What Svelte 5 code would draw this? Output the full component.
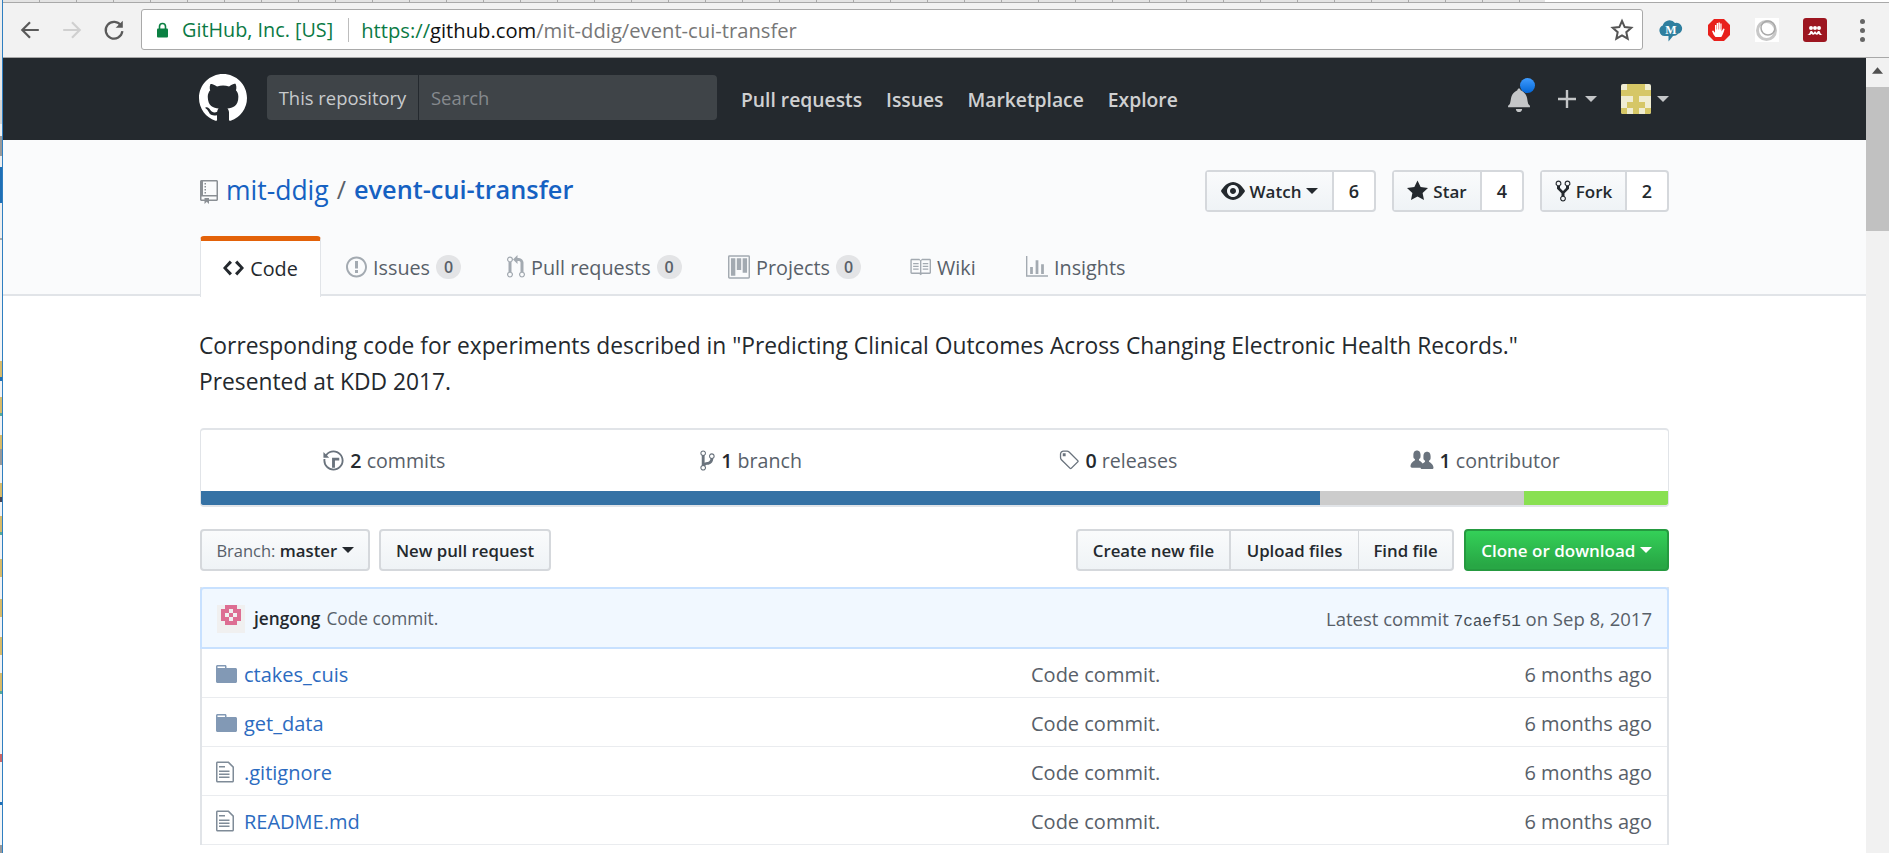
<script>
  const edge = [
    [50,'#e8e8e8'],[24,'#d5d5d5'],[12,'#f0f0f0'],[20,'#999'],[11,'#eee'],[36,'#1f6fb5'],[35,'#eee'],[2,'#aaa'],[121,'#f4f4f4'],
    [16,'#d9bb6a'],[4,'#1f6fb5'],[16,'#f2f2f2'],[16,'#d9bb6a'],[3,'#5a9'],[19,'#f2f2f2'],[14,'#d9bb6a'],[16,'#999'],[18,'#f2f2f2'],
    [14,'#d9bb6a'],[5,'#445'],[14,'#f2f2f2'],[16,'#d9bb6a'],[3,'#5a9'],[24,'#f2f2f2'],[18,'#d9bb6a'],[22,'#f2f2f2'],[18,'#d9bb6a'],
    [20,'#f2f2f2'],[18,'#d9bb6a'],[18,'#f2f2f2'],[18,'#d9bb6a'],[3,'#5a9'],[60,'#f4f4f4'],[8,'#c66'],[40,'#f4f4f4'],[3,'#1f6fb5'],[40,'#f4f4f4'],[10,'#999'],[20,'#f4f4f4'],[12,'#d9bb6a'],[8,'#1f6fb5'],[10,'#f4f4f4'],[16,'#999'],[14,'#f4f4f4'],[16,'#d9bb6a']
  ];
  const p = {
    logo: 'M8 0C3.58 0 0 3.58 0 8c0 3.54 2.29 6.53 5.47 7.59.4.07.55-.17.55-.38 0-.19-.01-.82-.01-1.49-2.01.37-2.53-.49-2.69-.94-.09-.23-.48-.94-.82-1.13-.28-.15-.68-.52-.01-.53.63-.01 1.08.58 1.23.82.72 1.21 1.87.87 2.33.66.07-.52.28-.87.51-1.07-1.78-.2-3.64-.89-3.64-3.95 0-.87.31-1.59.82-2.15-.08-.2-.36-1.02.08-2.12 0 0 .67-.21 2.2.82.64-.18 1.32-.27 2-.27.68 0 1.36.09 2 .27 1.53-1.04 2.2-.82 2.2-.82.44 1.1.16 1.92.08 2.12.51.56.82 1.27.82 2.15 0 3.07-1.87 3.75-3.65 3.95.29.25.54.73.54 1.48 0 1.07-.01 1.93-.01 2.2 0 .21.15.46.55.38A8.013 8.013 0 0016 8c0-4.42-3.58-8-8-8z',
    bell: 'M14 12v1H0v-1l.73-.58c.77-.77.81-2.55 1.19-4.42C2.69 3.23 6 2 6 2c0-.55.45-1 1-1s1 .45 1 1c0 0 3.39 1.23 4.16 5 .38 1.88.42 3.66 1.19 4.42l.66.58H14zm-7 4c1.11 0 2-.89 2-2H5c0 1.11.89 2 2 2z',
    repo: 'M4 9H3V8h1v1zm0-3H3v1h1V6zm0-2H3v1h1V4zm0-2H3v1h1V2zm8-1v12c0 .55-.45 1-1 1H6v2l-1.5-1.5L3 16v-2H1c-.55 0-1-.45-1-1V1c0-.55.45-1 1-1h10c.55 0 1 .45 1 1zm-1 10H1v2h2v-1h3v1h5v-2zm0-10H2v9h9V1z',
    code: 'M9.5 3L8 4.5 11.5 8 8 11.5 9.5 13 14 8 9.5 3zm-5 0L0 8l4.5 5L6 11.5 2.5 8 6 4.5 4.5 3z',
    issue: 'M7 2.3c3.14 0 5.7 2.56 5.7 5.7s-2.56 5.7-5.7 5.7A5.71 5.71 0 0 1 1.3 8c0-3.14 2.56-5.7 5.7-5.7zM7 1C3.14 1 0 4.14 0 8s3.14 7 7 7 7-3.14 7-7-3.14-7-7-7zm1 3H6v5h2V4zm0 6H6v2h2v-2z',
    pull: 'M11 11.28V5c-.03-.78-.34-1.47-.94-2.06C9.46 2.35 8.78 2.03 8 2H7V0L4 3l3 3V4h1c.27.02.48.11.69.31.21.2.3.42.31.69v6.28A1.993 1.993 0 0 0 10 15a1.993 1.993 0 0 0 1-3.72zm-1 2.92c-.66 0-1.2-.55-1.2-1.2 0-.65.55-1.2 1.2-1.2.65 0 1.2.55 1.2 1.2 0 .65-.55 1.2-1.2 1.2zM4 3c0-1.11-.89-2-2-2a1.993 1.993 0 0 0-1 3.72v6.56A1.993 1.993 0 0 0 2 15a1.993 1.993 0 0 0 1-3.72V4.72c.59-.34 1-.98 1-1.72zm-.8 10c0 .66-.55 1.2-1.2 1.2-.65 0-1.2-.55-1.2-1.2 0-.65.55-1.2 1.2-1.2.65 0 1.2.55 1.2 1.2zM2 4.2C1.34 4.2.8 3.65.8 3c0-.65.55-1.2 1.2-1.2.65 0 1.2.55 1.2 1.2 0 .65-.55 1.2-1.2 1.2z',
    project: 'M10 12h3V2h-3v10zm-4-2h3V2H6v8zm-4 4h3V2H2v12zm-1 1h13V1H1v14zM14 0H1a1 1 0 0 0-1 1v14a1 1 0 0 0 1 1h13a1 1 0 0 0 1-1V1a1 1 0 0 0-1-1z',
    book: 'M3 5h4v1H3V5zm0 3h4V7H3v1zm0 2h4V9H3v1zm11-5h-4v1h4V5zm0 2h-4v1h4V7zm0 2h-4v1h4V9zm2-6v9c0 .55-.45 1-1 1H9.5l-1 1-1-1H2c-.55 0-1-.45-1-1V3c0-.55.45-1 1-1h5.5l1 1 1-1H15c.55 0 1 .45 1 1zm-8 .5L7.5 3H2v9h6V3.5zm7-.5H9.5l-.5.5V12h6V3z',
    graph: 'M16 14v1H0V0h1v14h15zM5 13H3V8h2v5zm4 0H7V3h2v10zm4 0h-2V6h2v7z',
    eye: 'M8.06 2C3 2 0 8 0 8s3 6 8.06 6C13 14 16 8 16 8s-3-6-7.94-6zM8 12c-2.2 0-4-1.78-4-4 0-2.2 1.8-4 4-4 2.22 0 4 1.8 4 4 0 2.22-1.78 4-4 4zm2-4c0 1.11-.89 2-2 2-1.11 0-2-.89-2-2 0-1.11.89-2 2-2 1.11 0 2 .89 2 2z',
    star: 'M14 6l-4.9-.64L7 1 4.9 5.36 0 6l3.6 3.26L2.67 14 7 11.67 11.33 14l-.93-4.74L14 6z',
    fork: 'M8 1a1.993 1.993 0 0 0-1 3.72V6L5 8 3 6V4.72A1.993 1.993 0 0 0 2 1a1.993 1.993 0 0 0-1 3.72V6.5l3 3v1.78A1.993 1.993 0 0 0 5 15a1.993 1.993 0 0 0 1-3.72V9.5l3-3V4.72A1.993 1.993 0 0 0 8 1zM2 4.2C1.34 4.2.8 3.65.8 3c0-.65.55-1.2 1.2-1.2.65 0 1.2.55 1.2 1.2 0 .65-.55 1.2-1.2 1.2zm3 10c-.66 0-1.2-.55-1.2-1.2 0-.65.55-1.2 1.2-1.2.65 0 1.2.55 1.2 1.2 0 .65-.55 1.2-1.2 1.2zm3-10c-.66 0-1.2-.55-1.2-1.2 0-.65.55-1.2 1.2-1.2.65 0 1.2.55 1.2 1.2 0 .65-.55 1.2-1.2 1.2z',
    history: 'M8 13H6V6h5v2H8v5zM7 1C4.81 1 2.87 2.02 1.59 3.59L0 2v4h4L2.5 4.5C3.55 3.17 5.17 2.3 7 2.3c3.14 0 5.7 2.56 5.7 5.7s-2.56 5.7-5.7 5.7A5.71 5.71 0 0 1 1.3 8c0-.34.03-.67.09-1H.08C.03 7.33 0 7.66 0 8c0 3.86 3.14 7 7 7s7-3.14 7-7-3.14-7-7-7z',
    branch: 'M10 5c0-1.11-.89-2-2-2a1.993 1.993 0 0 0-1 3.72v.3c-.02.52-.23.98-.63 1.38-.4.4-.86.61-1.38.63-.83.02-1.48.16-2 .45V4.72a1.993 1.993 0 0 0-1-3.72C.88 1 0 1.89 0 3a2 2 0 0 0 1 1.72v6.56c-.59.35-1 .99-1 1.72 0 1.11.89 2 2 2 1.11 0 2-.89 2-2 0-.53-.2-1-.53-1.36.09-.06.48-.41.59-.47.25-.11.56-.17.94-.17 1.05-.05 1.95-.45 2.75-1.25S8.95 7.77 9 6.73h-.02C9.59 6.37 10 5.73 10 5zM2 1.8c.66 0 1.2.55 1.2 1.2 0 .65-.55 1.2-1.2 1.2C1.35 4.2.8 3.65.8 3c0-.65.55-1.2 1.2-1.2zm0 12.41c-.66 0-1.2-.55-1.2-1.2 0-.65.55-1.2 1.2-1.2.65 0 1.2.55 1.2 1.2 0 .65-.55 1.2-1.2 1.2zm6-8c-.66 0-1.2-.55-1.2-1.2 0-.65.55-1.2 1.2-1.2.65 0 1.2.55 1.2 1.2 0 .65-.55 1.2-1.2 1.2z',
    tag: 'M7.73 1.73C7.26 1.26 6.62 1 5.96 1H3.5C2.13 1 1 2.13 1 3.5v2.47c0 .66.27 1.3.73 1.77l6.06 6.06c.39.39 1.02.39 1.41 0l4.59-4.59a.996.996 0 0 0 0-1.41L7.73 1.73zM2.38 7.09c-.31-.3-.47-.7-.47-1.13V3.5c0-.88.72-1.59 1.59-1.59h2.47c.42 0 .83.16 1.13.47l6.14 6.13-4.73 4.73-6.13-6.15zM3.01 3h2v2H3V3h.01z',
    org: 'M16 12.999c0 .439-.45 1-1 1H7.995c-.539 0-.994-.447-.995-.999H1c-.54 0-1-.561-1-1 0-2.634 3-4 3-4s.229-.409 0-1c-.841-.621-1.058-.59-1-3 .058-2.419 1.367-3 2.5-3s2.442.58 2.5 3c.058 2.41-.159 2.379-1 3-.229.59 0 1 0 1s1.549.711 2.42 2.088C9.196 9.369 10 8.999 10 8.999s.229-.409 0-1c-.841-.62-1.058-.59-1-3 .058-2.419 1.367-3 2.5-3s2.437.581 2.495 3c.059 2.41-.158 2.38-1 3-.229.59 0 1 0 1s3.005 1.366 3.005 4z',
    dir: 'M13 4H7V3c0-.66-.31-1-1-1H1c-.55 0-1 .45-1 1v10c0 .55.45 1 1 1h12c.55 0 1-.45 1-1V5c0-.55-.45-1-1-1zM6 4H1V3h5v1z',
    file: 'M6 5H2V4h4v1zM2 8h7V7H2v1zm0 2h7V9H2v1zm0 2h7v-1H2v1zm10-7.5V14c0 .55-.45 1-1 1H1c-.55 0-1-.45-1-1V2c0-.55.45-1 1-1h7.5L12 4.5zM11 5L8 2H1v12h10V5z'
  };
  const tabs = [
    { name:'Issues', path:p.issue, vb:'0 0 14 16', w:21, count:0, wrapW:161 },
    { name:'Pull requests', path:p.pull, vb:'0 0 12 16', w:18, count:0, wrapW:221 },
    { name:'Projects', path:p.project, vb:'0 0 15 16', w:22, count:0, wrapW:181 },
    { name:'Wiki', path:p.book, vb:'0 0 16 16', w:22, wrapW:117 },
    { name:'Insights', path:p.graph, vb:'0 0 16 16', w:22 }
  ];
  const files = [
    { name:'ctakes_cuis', dir:true },
    { name:'get_data', dir:true },
    { name:'.gitignore' },
    { name:'README.md' }
  ];
  const stats = [
    { n:'2', t:'commits', path:p.history, vb:'0 0 14 16', w:21, h:23 },
    { n:'1', t:'branch', path:p.branch, vb:'0 0 10 16', w:15, h:23 },
    { n:'0', t:'releases', path:p.tag, vb:'0 0 14 16', w:21, h:23 },
    { n:'1', t:'contributor', path:p.org, vb:'0 0 16 16', w:24, h:23 }
  ];
  const social = [
    { t:'Watch', c:6, path:p.eye, vb:'0 0 16 16', iw:24, w:171, caret:true },
    { t:'Star', c:4, path:p.star, vb:'0 0 14 16', iw:21, w:132 },
    { t:'Fork', c:2, path:p.fork, vb:'0 0 10 16', iw:16, w:129 }
  ];
</script>

<div class="page">
  <div class="edge">
    {#each edge as e}
      <i style="height:{e[0]}px;background:{e[1]}"></i>
    {/each}
  </div>
  <div class="rest">
    <div class="tabstrip"></div>
    <div class="chrome">
      <svg class="cicon back" viewBox="0 0 20 20" width="22" height="22"><path d="M18 10H3M10 3l-7 7 7 7" fill="none" stroke="#5a5a5a" stroke-width="2"/></svg>
      <svg class="cicon fwd" viewBox="0 0 20 20" width="22" height="22"><path d="M2 10h15M10 3l7 7-7 7" fill="none" stroke="#d0d0d0" stroke-width="2"/></svg>
      <svg class="cicon rel" viewBox="0 0 20 20" width="22" height="22"><path d="M16.5 6.2A7.6 7.6 0 1 0 17.6 11" fill="none" stroke="#5a5a5a" stroke-width="2"/><path d="M18 1.5V8h-6.5z" fill="#5a5a5a"/></svg>
      <div class="omni">
        <svg class="lock" viewBox="0 0 12 16" width="13" height="16"><path d="M3 7V4.5a3 3 0 0 1 6 0V7" fill="none" stroke="#0b8043" stroke-width="1.6"/><rect x="0.5" y="6.5" width="11" height="9" rx="1" fill="#0b8043"/></svg>
        <span class="ev">GitHub, Inc. [US]</span>
        <span class="sep"></span>
        <span class="url"><span class="ev">https://</span><span class="host">github.com</span>/mit-ddig/event-cui-transfer</span>
        <svg class="bm" viewBox="0 0 24 24" width="24" height="24"><path d="M12 3l2.7 6.1 6.6.7-5 4.4 1.4 6.5L12 17.4l-5.7 3.3 1.4-6.5-5-4.4 6.6-.7z" fill="none" stroke="#555" stroke-width="2" stroke-linejoin="miter"/></svg>
      </div>
      <div class="exts">
        <svg viewBox="0 0 24 24" width="25" height="24"><path d="M6 18a5.500 5.500 0 0 1-1.800-10.500A7 7 0 0 1 16.500 5a5.500 5.500 0 0 1 3 10.800c-1 1.500-2.700 2.200-5 2.200L10 23.500V18z" fill="#2f7f9f"/><text x="12.500" y="15.500" class="mm">M</text></svg>
        <svg viewBox="0 0 24 24" width="24" height="24"><path d="M7 1h10l6 6v10l-6 6H7l-6-6V7z" fill="#e8201c"/><path d="M8.500 19c-1.500-1.500-2.500-3.500-3.500-6l1.200-.6 1.800 2.300V7h1.300v4.500h.4V5h1.400v6.500h.4V4.500h1.400v7h.4V5.500h1.300v8l1.700-3 1.300.6c-.8 3-1.800 5.700-3.300 7.900z" fill="#fff"/></svg>
        <svg viewBox="0 0 24 24" width="24" height="24"><rect width="24" height="24" fill="#fff"/><circle cx="11.500" cy="12.500" r="9" fill="none" stroke="#c8c8c8" stroke-width="3"/><circle cx="13" cy="10" r="7" fill="none" stroke="#a9a9a9" stroke-width="1.500"/></svg>
        <svg viewBox="0 0 24 24" width="24" height="24"><rect width="24" height="24" rx="3" fill="#9d1620"/><circle cx="12" cy="10" r="2" fill="#fff"/><circle cx="8" cy="10" r="2" fill="#fff"/><circle cx="16" cy="10" r="2" fill="#fff"/><path d="M4 16.500c2 0 2.500-1 3.500-3.500h1.500l1.500 2 1.500-2 1.500 2 1.500-2h1.500c1 2.500 1.500 3.500 3 3.500-1.500.8-3.200.5-4-.8-.8 1.300-2.500 1.300-3.500 0-1 1.300-2.700 1.300-3.500 0-.8 1.300-2.500 1.600-4 .8z" fill="#fff"/></svg>
      </div>
      <div class="kebab"><i></i><i></i><i></i></div>
    </div>
    <div class="view">
      <main>
        <nav class="gh">
          <svg class="logo" viewBox="0 0 16 16" width="48" height="48" fill="#fff"><path fill-rule="evenodd" d={p.logo}/></svg>
          <div class="search">
            <span class="scope">This repository</span>
            <span class="ph">Search</span>
          </div>
          <div class="links">
            <span>Pull requests</span><span>Issues</span><span>Marketplace</span><span>Explore</span>
          </div>
          <div class="navr">
            <div class="bellwrap">
              <svg viewBox="0 0 14 16" width="22" height="25" fill="#c4c6c8"><path d={p.bell}/></svg>
              <span class="dot"></span>
            </div>
            <svg class="plus" viewBox="0 0 18 18" width="18" height="18"><path d="M9 0v18M0 9h18" stroke="#c4c6c8" stroke-width="2.400"/></svg>
            <span class="caret nc"></span>
            <svg class="avatar" viewBox="0 0 5 5" width="30" height="30" shape-rendering="crispEdges"><rect width="5" height="5" fill="#f0edd2"/><path d="M0 1h5v1H0zM1 0h3v1H1zM2 2h1v3H2zM1 3h1v1H1zM3 3h1v1H3zM0 4h1v1H0zM4 4h1v1H4z" fill="#d6c766"/></svg>
            <span class="caret nc2"></span>
          </div>
        </nav>

        <header class="rh">
          <div class="rtop">
            <svg class="repo" viewBox="0 0 12 16" width="18" height="24" fill="#8a8f94"><path fill-rule="evenodd" d={p.repo}/></svg>
            <h1><a class="own">mit-ddig</a><span class="sl">/</span><a class="rn">event-cui-transfer</a></h1>
            <div class="social">
              {#each social as s}
                <div class="sb" style="width:{s.w}px">
                  <span class="sbmain">
                    <svg viewBox={s.vb} width={s.iw} height="24" fill="#24292e"><path fill-rule="evenodd" d={s.path}/></svg>
                    {s.t}
                    {#if s.caret}<span class="caret dk"></span>{/if}
                  </span>
                  <span class="sbc">{s.c}</span>
                </div>
              {/each}
            </div>
          </div>
          <div class="tabs">
            <div class="tab active">
              <svg viewBox="0 0 14 16" width="21" height="24" fill="#24292e"><path fill-rule="evenodd" d={p.code}/></svg>
              Code
            </div>
            {#each tabs as t}
              <div class="tab" style={t.wrapW ? `width:${t.wrapW}px` : ''}>
                <svg viewBox={t.vb} width={t.w} height="24" fill="#a3aab1"><path fill-rule="evenodd" d={t.path}/></svg>
                {t.name}
                {#if t.count !== undefined}<span class="pill">{t.count}</span>{/if}
              </div>
            {/each}
          </div>
        </header>

        <section class="body">
          <p class="desc">Corresponding code for experiments described in "Predicting Clinical Outcomes Across Changing Electronic Health Records."<br>Presented at KDD 2017.</p>

          <div class="summary">
            <div class="stats">
              {#each stats as s}
                <div class="stat">
                  <svg viewBox={s.vb} width={s.w} height={s.h} fill="#6a737d"><path fill-rule="evenodd" d={s.path}/></svg>
                  <span><b>{s.n}</b> {s.t}</span>
                </div>
              {/each}
            </div>
            <div class="lang"><i class="l1"></i><i class="l2"></i><i class="l3"></i></div>
          </div>

          <div class="actions">
            <span class="btn branch"><span class="muted">Branch:</span> master <span class="caret dk"></span></span>
            <span class="btn npr">New pull request</span>
            <div class="grp">
              <span class="btn g1">Create new file</span><span class="btn g2">Upload files</span><span class="btn g3">Find file</span>
            </div>
            <span class="btn clone">Clone or download <span class="caret wh"></span></span>
          </div>

          <div class="table">
            <div class="commit">
              <svg class="ca" viewBox="0 0 7 7" width="28" height="31" shape-rendering="crispEdges"><rect width="7" height="7" fill="#f0f0f0"/><path d="M2 0h3v1H2zM1 1h2v1H1zM4 1h2v1H4zM1 2h1v1H1zM3 2h1v1H3zM5 2h1v1H5zM1 3h2v1H1zM4 3h2v1H4zM2 4h3v1H2z" fill="#dd6e93"/></svg>
              <b>jengong</b><span class="cm">Code commit.</span>
              <span class="latest">Latest commit <code>7caef51</code> on Sep 8, 2017</span>
            </div>
            {#each files as f}
              <div class="row">
                {#if f.dir}
                  <svg class="fi" viewBox="0 0 14 16" width="21" height="24" fill="#8299b5"><path fill-rule="evenodd" d={p.dir}/></svg>
                {:else}
                  <svg class="fi ft" viewBox="0 0 12 16" width="18" height="24" fill="#7f8b98"><path fill-rule="evenodd" d={p.file}/></svg>
                {/if}
                <a class="fname">{f.name}</a>
                <span class="msg">Code commit.</span>
                <span class="age">6 months ago</span>
              </div>
            {/each}
          </div>
        </section>
      </main>
      <div class="sbar">
        <svg class="up" viewBox="0 0 10 6" width="11" height="7"><path d="M5 0l5 6H0z" fill="#505050"/></svg>
        <div class="thumb"></div>
      </div>
    </div>
  </div>
</div>

<style>
  :global(body) { margin: 0; }
  .page {
    width: 1889px; height: 853px; overflow: hidden; display: flex; background: #fff;
    font-family: "Open Sans", "Noto Sans", sans-serif; font-size: 19px; color: #24292e;
  }
  .edge { width: 3px; flex: none; display: flex; flex-direction: column; border-right: 1px solid #2f7fc1; box-sizing: border-box; height: 853px; padding-top: 50px; background: #eee; overflow: hidden; }
  .edge i { display: block; flex: none; }
  .rest { flex: 1; min-width: 0; display: flex; flex-direction: column; }
  .tabstrip {
    height: 3px; flex: none; border-bottom: 1px solid #a9a9a9; box-sizing: border-box;
    background: linear-gradient(90deg, transparent 1542px, #fff 1542px), repeating-linear-gradient(90deg, #e4e4e4 0 36px, #a9a9a9 36px 37px);
  }
  .chrome { height: 55px; flex: none; background: #f2f2f2; border-bottom: 1px solid #a8a8a8; box-sizing: border-box; display: flex; align-items: center; }
  .cicon { flex: none; }
  .back { margin-left: 16px; }
  .fwd { margin-left: 20px; }
  .rel { margin-left: 20px; }
  .omni { width: 1502px; height: 41px; box-sizing: border-box; margin: -1px 0 0 16px; background: #fff; border: 1px solid #a9a9a9; border-radius: 3px; display: flex; align-items: center; font-size: 19.800px; }
  .lock { margin-left: 14px; }
  .ev { color: #0b7a45; }
  .omni > .ev { margin-left: 13px; }
  .sep { width: 1px; height: 24px; background: #bdbdbd; margin: 0 12px 0 15px; }
  .url { color: #777; font-size: 20.200px; }
  .host { color: #111; }
  .bm { margin-left: auto; margin-right: 8px; }
  .exts { display: flex; align-items: center; gap: 24px; margin-left: 15px; }
  .exts svg { display: block; }
  .mm { font: 700 12px "Liberation Serif", serif; fill: #fff; text-anchor: middle; }
  .kebab { display: flex; flex-direction: column; gap: 4px; margin-left: 33px; }
  .kebab i { width: 5px; height: 5px; border-radius: 50%; background: #666; display: block; }
  .view { flex: 1; min-height: 0; display: flex; }
  main { flex: 1; min-width: 0; overflow: hidden; }
  .sbar { width: 23px; flex: none; background: #f1f1f1; display: flex; flex-direction: column; align-items: center; box-sizing: border-box; }
  .up { margin-top: 9px; }
  .thumb { width: 100%; height: 144px; margin-top: 13px; background: #c1c1c1; }

  nav.gh { height: 82px; background: #24292e; display: flex; align-items: center; padding-left: 196px; color: #fff; }
  .logo { flex: none; margin-top: -2px; }
  .search { width: 450px; height: 45px; margin: -3px 0 0 20px; display: flex; align-items: center; background: #3f4448; border-radius: 4px; flex: none; font-size: 18.400px; }
  .scope { width: 152px; height: 45px; box-sizing: border-box; display: flex; align-items: center; justify-content: center; color: #c8cbcd; border-right: 1px solid #24292e; }
  .ph { margin-left: 12px; color: #868a8e; }
  .links { display: flex; gap: 24px; margin: 1px 0 0 24px; font-size: 19.300px; font-weight: 600; color: rgba(255,255,255,.8); }
  .navr { margin-left: auto; margin-right: 197px; display: flex; align-items: center; }
  .bellwrap { position: relative; height: 25px; }
  .bellwrap svg { display: block; }
  .dot { position: absolute; right: -5px; top: -9px; width: 15px; height: 15px; border-radius: 50%; background: linear-gradient(#3f9cff, #0366d6); }
  .plus { margin-left: 28px; }
  .caret { display: inline-block; width: 0; height: 0; border-style: solid; border-width: 6px 6px 0; border-color: currentColor transparent transparent; vertical-align: middle; }
  .nc { color: #c4c6c8; margin-left: 9px; }
  .avatar { margin-left: 24px; border-radius: 2px; }
  .nc2 { color: #c4c6c8; margin-left: 6px; }

  .rh { height: 156px; box-sizing: border-box; background: #fafbfc; border-bottom: 2px solid #e1e4e8; padding: 30px 197px 0; }
  .rtop { height: 42px; display: flex; align-items: center; }
  .repo { flex: none; margin-top: 2px; }
  h1 { margin: -2px 0 0 8px; font-size: 25.300px; font-weight: 400; color: #586069; display: flex; }
  h1 a { color: #1561c2; }
  .own { font-size: 26.500px; }
  .sl { margin: 0 8px; }
  .rn { font-weight: 600; }
  .social { margin-left: auto; display: flex; gap: 16px; }
  .sb { height: 42px; box-sizing: border-box; border: 2px solid #d5d8dc; border-radius: 4px; display: flex; background: #fff; }
  .sbmain { flex: 1; display: flex; align-items: center; justify-content: center; gap: 5px; background: linear-gradient(#fafbfc, #eff3f6); border-right: 2px solid #d5d8dc; font-weight: 600; font-size: 17px; }
  .sbmain .caret { margin-left: 0; }
  .sbc { width: 40px; display: flex; align-items: center; justify-content: center; font-weight: 600; font-size: 18px; flex: none; }
  .tabs { display: flex; margin-top: 24px; height: 60px; align-items: stretch; }
  .tab { display: flex; align-items: center; gap: 6px; color: #586069; font-size: 19.800px; flex: none; white-space: nowrap; padding-top: 2px; box-sizing: border-box; }
  .tab.active { width: 121px; justify-content: center; background: #fff; color: #24292e; border: 1px solid #e1e4e8; border-top: 5px solid #e36209; border-bottom: 0; border-radius: 4px 4px 0 0; height: 61px; margin-right: 25px; padding: 0 0 2px; }
  .pill { width: 25px; height: 24px; border-radius: 12px; background: rgba(27,31,35,.1); display: inline-flex; align-items: center; justify-content: center; font-size: 16px; font-weight: 600; color: #586069; }

  .body { padding: 0 197px; }
  .desc { margin: 32px 0 0 -1px; font-size: 22.800px; line-height: 36px; white-space: nowrap; }
  .summary { margin-top: 28px; height: 79px; box-sizing: border-box; border: 2px solid #e1e4e8; border-left-width: 1px; border-right-width: 1px; border-radius: 4px; display: flex; flex-direction: column; overflow: hidden; }
  .stats { flex: 1; display: grid; grid-template-columns: repeat(4, 1fr); }
  .stat { display: flex; align-items: center; justify-content: center; gap: 6px; color: #586069; font-size: 19.600px; white-space: pre; }
  .stat b { color: #24292e; font-weight: 600; }
  .lang { height: 14px; display: flex; flex: none; }
  .lang i { display: block; height: 100%; }
  .l1 { width: 1119px; background: #3572a5; }
  .l2 { width: 204px; background: #ccc; }
  .l3 { flex: 1; background: #89e051; }

  .actions { display: flex; margin-top: 22px; height: 42px; }
  .btn { height: 42px; box-sizing: border-box; border: 2px solid #d5d8dc; border-radius: 4px; background: linear-gradient(#fafbfc, #eff3f6); display: flex; align-items: center; justify-content: center; font-weight: 600; font-size: 16.800px; white-space: pre; }
  .muted { color: #586069; font-weight: 400; font-size: 16.500px; }
  .branch { width: 170px; }
  .branch .caret { margin-left: 0; }
  .npr { width: 172px; margin-left: 9px; }
  .grp { display: flex; margin-left: auto; }
  .g1 { width: 155px; border-radius: 4px 0 0 4px; }
  .g2 { width: 129px; border-radius: 0; border-left: 1px solid #d5d8dc; border-right-width: 1px; margin-left: -1px; }
  .g3 { width: 95px; border-radius: 0 4px 4px 0; border-left: 0; }
  .clone { width: 205px; margin-left: 10px; color: #fff; background: linear-gradient(#34d058, #28a745 90%); border-color: #259a40; font-size: 17px; }
  .clone .caret { margin-left: 0; color: #fff; }

  .table { margin-top: 16px; border: 2px solid #e1e4e8; border-bottom: 0; border-top: 0; }
  .commit { margin: 0 -2px; height: 62px; box-sizing: border-box; background: #f1f8ff; border: 2px solid #c8e1ff; border-radius: 4px 4px 0 0; display: flex; align-items: center; padding: 0 15px; font-size: 17.300px; color: #586069; }
  .ca { flex: none; }
  .commit b { color: #24292e; font-weight: 600; margin-left: 9px; }
  .cm { margin-left: 6px; }
  .latest { margin-left: auto; font-size: 18.500px; }
  code { font-family: "Liberation Mono", monospace; font-size: 16px; color: #444d56; }
  .row { height: 49px; box-sizing: border-box; border-bottom: 1px solid #eaecef; display: flex; align-items: center; padding: 2px 15px 0 14px; font-size: 20px; }
  .fi { flex: none; }
  .ft { margin-right: 3px; }
  .row svg + .fname { margin-left: 7px; }
  .fname { width: 787px; flex: none; color: #2c6bc0; }
  .msg { color: #586069; }
  .age { margin-left: auto; color: #586069; }
</style>
